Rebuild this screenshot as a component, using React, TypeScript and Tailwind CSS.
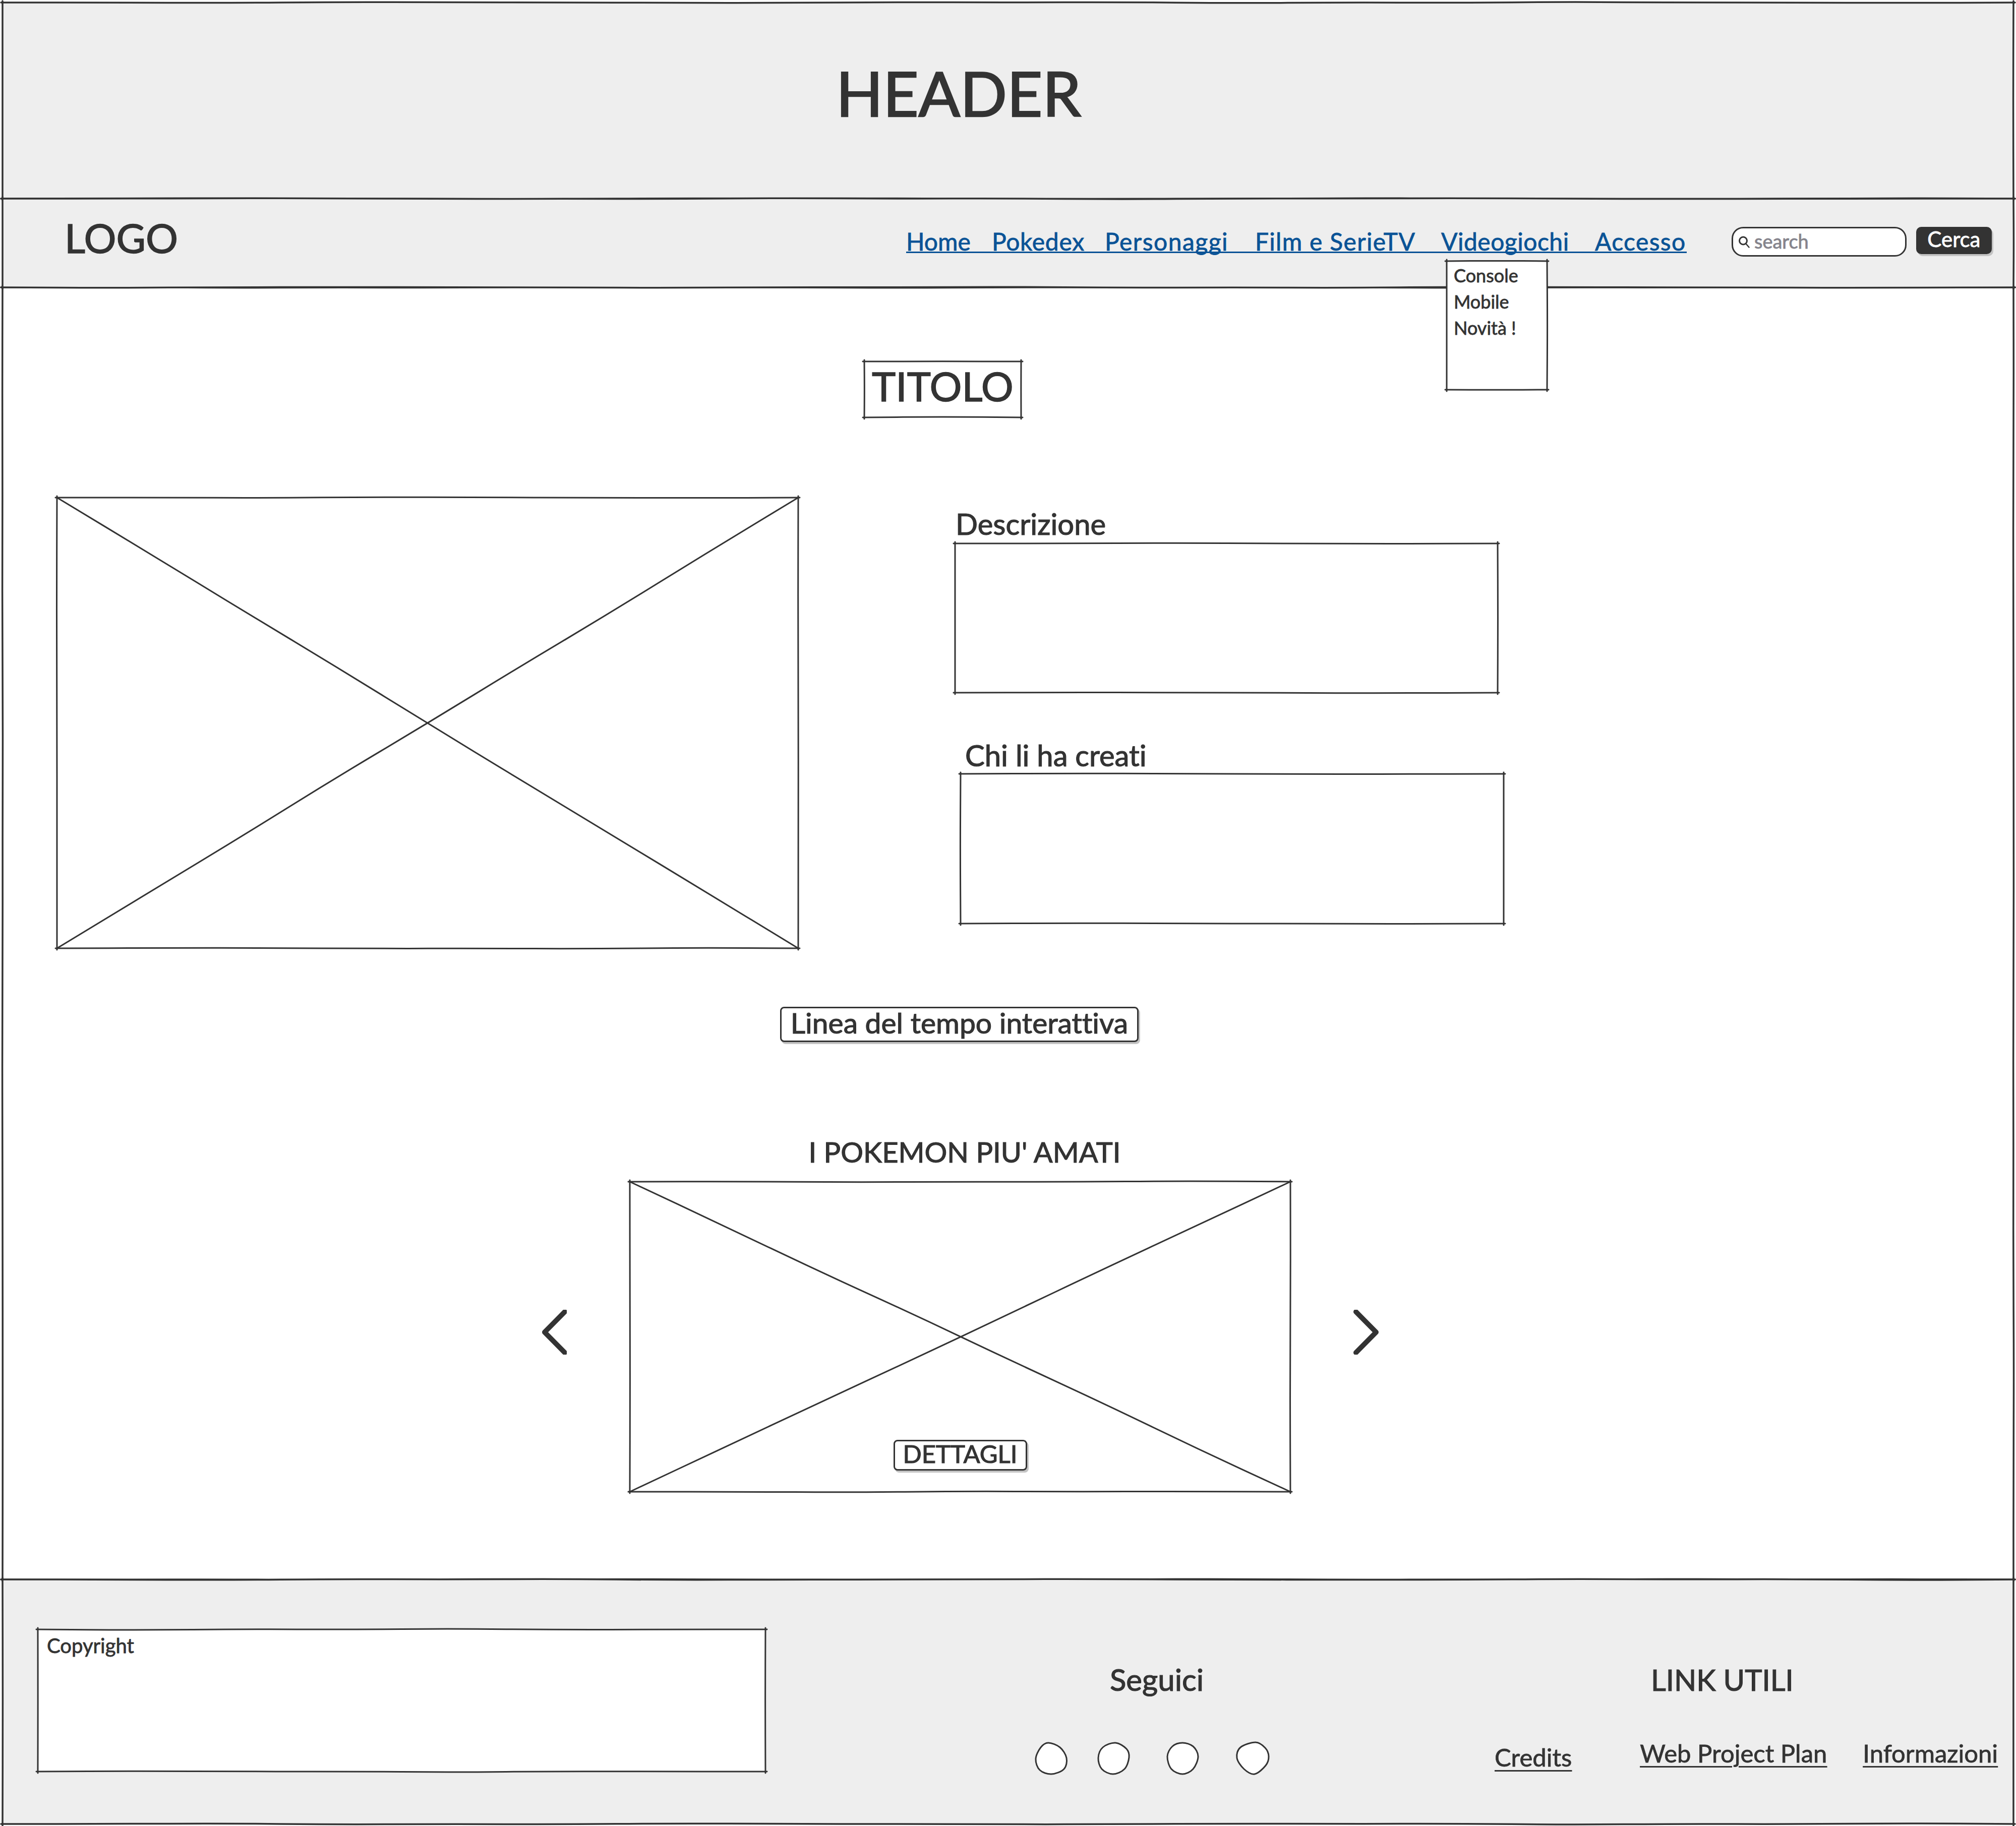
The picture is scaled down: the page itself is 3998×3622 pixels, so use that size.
import React from "react";

const ink = "#333333";

// small wavy line so that the frames look hand drawn like the wireframe
function wobble(x1: number, y1: number, x2: number, y2: number, seed: number, amp = 1.4) {
  const len = Math.hypot(x2 - x1, y2 - y1);
  const n = Math.max(2, Math.round(len / 220));
  const nx = -(y2 - y1) / (len || 1);
  const ny = (x2 - x1) / (len || 1);
  let d = `M${x1} ${y1}`;
  let px = x1;
  let py = y1;
  for (let i = 1; i <= n; i++) {
    const t = i / n;
    const o = i === n ? 0 : amp * Math.sin(seed + i * 2.3) * Math.cos(seed * 0.7 + i * 1.1);
    const x = x1 + (x2 - x1) * t + nx * o;
    const y = y1 + (y2 - y1) * t + ny * o;
    d += ` Q${px} ${py} ${(px + x) / 2} ${(py + y) / 2}`;
    px = x;
    py = y;
  }
  return `${d} L${x2} ${y2}`;
}

function SketchFrame({
  w,
  h,
  seed = 1,
  weight = 3,
  cross = false,
  over = 3,
}: {
  w: number;
  h: number;
  seed?: number;
  weight?: number;
  cross?: boolean;
  over?: number;
}) {
  const lines = [
    wobble(-over, 0, w + over, 0, seed),
    wobble(w, -over, w, h + over, seed + 1, 0.8),
    wobble(w + over, h, -over, h, seed + 2),
    wobble(0, h + over, 0, -over, seed + 3, 0.8),
  ];
  if (cross) {
    lines.push(wobble(0, 0, w, h, seed + 4, 1.6));
    lines.push(wobble(w, 0, 0, h, seed + 5, 1.6));
  }
  return (
    <svg
      className="absolute left-0 top-0 overflow-visible pointer-events-none"
      width={w}
      height={h}
      fill="none"
    >
      {lines.map((d, i) => (
        <path key={i} d={d} stroke={ink} strokeWidth={weight} strokeLinecap="round" />
      ))}
    </svg>
  );
}

function SketchButton({
  w,
  h,
  label,
  textClass,
}: {
  w: number;
  h: number;
  label: string;
  textClass: string;
}) {
  return (
    <div
      className="flex items-center justify-center rounded-[8px] border-[3px] border-[#333333] bg-white shadow-[3px_4px_0_#c4c4c4]"
      style={{ width: w, height: h }}
    >
      <span className={textClass}>{label}</span>
    </div>
  );
}

// closed smooth curve through the traced outline points
function blobPath(pts: number[][]) {
  const n = pts.length;
  let d = `M${pts[0][0]} ${pts[0][1]}`;
  for (let i = 0; i < n; i++) {
    const p0 = pts[(i - 1 + n) % n];
    const p1 = pts[i];
    const p2 = pts[(i + 1) % n];
    const p3 = pts[(i + 2) % n];
    const c1x = p1[0] + (p2[0] - p0[0]) / 6;
    const c1y = p1[1] + (p2[1] - p0[1]) / 6;
    const c2x = p2[0] - (p3[0] - p1[0]) / 6;
    const c2y = p2[1] - (p3[1] - p1[1]) / 6;
    d += ` C${c1x} ${c1y} ${c2x} ${c2y} ${p2[0]} ${p2[1]}`;
  }
  return `${d}Z`;
}

function Blob({ pts, className }: { pts: number[][]; className: string }) {
  return (
    <svg className={className} width="64" height="64" viewBox="0 0 64 64" fill="none" overflow="visible">
      <path d={blobPath(pts)} fill="white" stroke={ink} strokeWidth="3" />
    </svg>
  );
}

const navLinks = [
  { label: "Home", className: "w-[130px]" },
  { label: "Pokedex", className: "ml-[40px] w-[183px] tracking-[0.7px]" },
  { label: "Personaggi", className: "ml-[41px] w-[242px] tracking-[1.5px]" },
  { label: "Film e SerieTV", className: "ml-[56px] w-[314px] tracking-[1.3px]" },
  { label: "Videogiochi", className: "ml-[55px] w-[252px] tracking-[0.5px]" },
  { label: "Accesso", className: "ml-[53px] w-[182px] tracking-[1.4px]" },
];

export default function App() {
  return (
    <div className="h-[3622px] w-full overflow-hidden bg-white px-[5px] pt-[5px] font-['Lato',sans-serif] text-[#333333] [font-variant-ligatures:none] [-webkit-text-stroke:0.8px]">
      <header className="relative h-[389px] bg-[#eeeeee]">
        <SketchFrame w={3988} h={389} seed={1} weight={3.5} />
        <h1 className="pl-[1653px] pt-[118px] text-[122px] leading-none font-normal [-webkit-text-stroke:2.5px]">HEADER</h1>
      </header>

      <nav className="relative z-10 flex h-[176px] bg-[#eeeeee]">
        <SketchFrame w={3988} h={176} seed={7} weight={3.5} />
        <div className="ml-[123px] mt-[37px] text-[80px] leading-none [-webkit-text-stroke:1.5px]">LOGO</div>
        <div className="ml-[1444px] mt-[61px] flex h-[47px] items-start border-b-[3px] border-[#0a5396] text-[48px] leading-none text-[#0a5396]">
          {navLinks.map((link) => (
            <a key={link.label} className={`whitespace-nowrap ${link.className}`}>
              {link.label}
            </a>
          ))}
        </div>
        <div className="ml-[89px] mt-[56px] flex h-[59px] w-[347px] items-center rounded-[23px] border-[3px] border-[#333333] bg-white pl-[10px] text-[38px] text-[#85848c]">
          <svg width="24" height="26" viewBox="0 0 24 26" fill="none" className="mr-[8px]">
            <circle cx="10" cy="10.5" r="7.5" stroke={ink} strokeWidth="3" />
            <path d="M15.5 16.5l6 7" stroke={ink} strokeWidth="2.5" strokeLinecap="round" />
          </svg>
          <span className="-mt-[4px] leading-none">search</span>
        </div>
        <div className="ml-[19px] mt-[56px] flex h-[54px] w-[150px] items-center justify-center rounded-[10px] bg-[#333333] text-[42px] leading-none text-white shadow-[3px_4px_0_#c4c4c4]">
          <span className="-mt-[6px]">Cerca</span>
        </div>

        {/* videogiochi dropdown */}
        <div className="absolute left-[2864px] top-[124px] h-[255px] w-[199px] bg-white pl-[14px] pt-[2px] text-[36px] leading-[52px]">
          <SketchFrame w={199} h={255} seed={11} />
          <div>Console</div>
          <div>Mobile</div>
          <div>Novità !</div>
        </div>
      </nav>

      <main className="relative h-[2563px]">
        <SketchFrame w={3988} h={2563} seed={15} weight={3.5} />
        <div className="ml-[1709px] pt-[147px]">
          <div className="relative flex h-[111px] w-[311px] items-center justify-center pb-[15px] text-[80px] leading-none [-webkit-text-stroke:1.5px]">
            <SketchFrame w={311} h={111} seed={19} />
            TITOLO
          </div>
        </div>

        <section className="mt-[159px] flex items-start">
          <div className="relative ml-[108px] h-[894px] w-[1470px]">
            <SketchFrame w={1470} h={894} seed={23} cross />
          </div>
          <div className="ml-[311px] mt-[23px] flex flex-col">
            <div className="h-[68px] pl-[1px] text-[58px] leading-none [-webkit-text-stroke:1.2px]">Descrizione</div>
            <div className="relative h-[296px] w-[1076px]">
              <SketchFrame w={1076} h={296} seed={29} />
            </div>
            <div className="ml-[11px] mt-[95px] h-[66px] pl-[9px] text-[58px] leading-none [-webkit-text-stroke:1.2px]">Chi li ha creati</div>
            <div className="relative ml-[11px] h-[297px] w-[1077px]">
              <SketchFrame w={1077} h={297} seed={31} />
            </div>
          </div>
        </section>

        <div className="ml-[1542px] mt-[116px]">
          <SketchButton w={711} h={70} label="Linea del tempo interattiva" textClass="-mt-[7px] text-[57px] leading-none [-webkit-text-stroke:1.2px]" />
        </div>

        <div className="ml-[1244px] mt-[190px] h-[87px] w-[1310px] pl-[18px] text-center text-[56px] leading-none [-webkit-text-stroke:1.2px]">
          I POKEMON PIU' AMATI
        </div>

        <section className="flex items-center pl-[1070px]">
          <svg width="49" height="89" viewBox="0 0 49 89" fill="none" className="mb-[19px]">
            <path d="M45 4L5 44.5 45 85" stroke={ink} strokeWidth="10" strokeLinecap="round" strokeLinejoin="round" />
          </svg>
          <div className="relative ml-[125px] h-[615px] w-[1310px]">
            <SketchFrame w={1310} h={615} seed={37} cross />
            <div className="absolute inset-x-0 bottom-[42px] flex justify-center">
              <SketchButton w={265} h={61} label="DETTAGLI" textClass="-mt-[6px] text-[49px] leading-none [-webkit-text-stroke:1.2px]" />
            </div>
          </div>
          <svg width="50" height="89" viewBox="0 0 50 89" fill="none" className="mb-[19px] ml-[125px]">
            <path d="M5 4L45 44.5 5 85" stroke={ink} strokeWidth="10" strokeLinecap="round" strokeLinejoin="round" />
          </svg>
        </section>
      </main>

      <footer className="relative flex h-[485px] items-start bg-[#eeeeee]">
        <SketchFrame w={3988} h={485} seed={41} weight={3.5} />
        <div className="relative ml-[70px] mt-[99px] h-[282px] w-[1443px] bg-white pl-[18px] pt-[6px] text-[40px] leading-[52px]">
          <SketchFrame w={1443} h={282} seed={43} />
          Copyright
        </div>

        <div className="ml-[535px] mt-[168px] flex w-[464px] flex-col">
          <div className="h-[60px] pl-[148px] text-[60px] leading-none [-webkit-text-stroke:1.2px]">Seguici</div>
          <div className="mt-[95px] flex">
            <Blob
              className="h-[64px] w-[64px]"
              pts={[[26, 1], [49, 10], [62, 31], [57, 53], [32, 63], [9, 55], [1, 33], [11, 10]]}
            />
            <Blob
              className="ml-[60px] h-[64px] w-[64px]"
              pts={[[35, 1], [57, 13], [62, 30], [53, 53], [30, 63], [8, 53], [1, 31], [10, 10]]}
            />
            <Blob
              className="ml-[73px] h-[64px] w-[64px]"
              pts={[[31, 1], [52, 8], [62, 28], [52, 53], [31, 63], [9, 53], [1, 28], [11, 8]]}
            />
            <Blob
              className="ml-[74px] h-[64px] w-[64px]"
              pts={[[38, 0], [57, 11], [64, 28], [58, 46], [36, 63], [15, 53], [1, 31], [8, 10]]}
            />
          </div>
        </div>

        <div className="ml-[447px] mt-[170px] flex w-[998px] flex-col">
          <div className="pl-[310px] text-[58px] leading-none [-webkit-text-stroke:1.2px]">LINK UTILI</div>
          <div className="flex items-start whitespace-nowrap text-[49px] leading-none underline decoration-[3px] underline-offset-[7px]">
            <a className="mt-[100px]">Credits</a>
            <a className="ml-[135px] mt-[92px]">Web Project Plan</a>
            <a className="ml-[71px] mt-[92px]">Informazioni</a>
          </div>
        </div>
      </footer>
    </div>
  );
}
